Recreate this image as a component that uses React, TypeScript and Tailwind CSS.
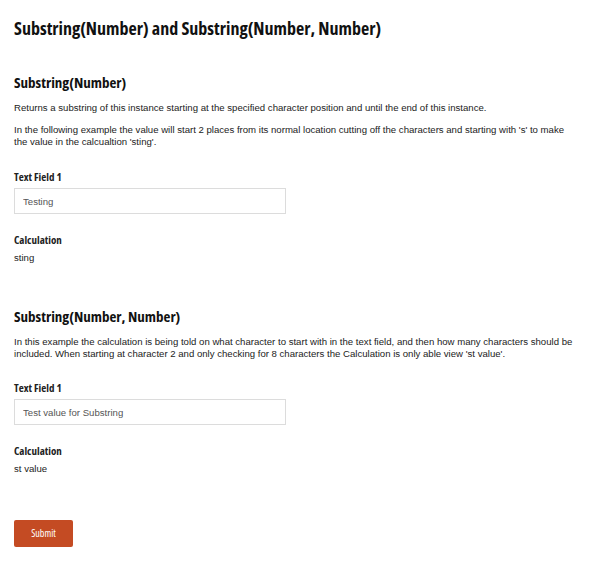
const HEADING_FONT = "font-['Open_Sans','DejaVu_Sans_Condensed',sans-serif] font-bold font-stretch-[75%]"

const BODY_FONT = "font-['Liberation_Sans',Arial,sans-serif]"

const H2_CLASSNAME = `${HEADING_FONT} text-[15px] leading-[20px] text-[#111]`

const P_CLASSNAME = 'mt-[10px] text-[9.6px] leading-[12px]'

const LABEL_CLASSNAME = `${HEADING_FONT} text-[11px] leading-[14px] text-[#222]`

const INPUT_CLASSNAME =
  "mt-[4px] block h-[26px] w-[272px] border border-[#dcdcdc] bg-white px-[8px] text-[9.6px] text-[#555] font-['Liberation_Sans',Arial,sans-serif] outline-none"

function Field(props: { label: string; value: string }) {
  return (
    <div>
      <div className={LABEL_CLASSNAME}>{props.label}</div>
      <input type="text" readOnly value={props.value} className={INPUT_CLASSNAME} />
    </div>
  )
}

function CalculationResult(props: { value: string }) {
  return (
    <div className="mt-[19px]">
      <div className={LABEL_CLASSNAME}>Calculation</div>
      <div className="mt-[5px] text-[9.6px] leading-[12px] text-[#222]">{props.value}</div>
    </div>
  )
}

export default function App() {
  return (
    <div className={`${BODY_FONT} min-h-[562px] bg-white px-[14px] pt-[16px] pb-[14px] text-[#222]`}>
      <h1 className={`${HEADING_FONT} text-[18px] leading-[24px] text-[#111]`}>
        Substring(Number) and Substring(Number, Number)
      </h1>

      <section className="mt-[32px]">
        <h2 className={H2_CLASSNAME}>Substring(Number)</h2>
        <p className={P_CLASSNAME}>
          Returns a substring of this instance starting at the specified character position and until the end of this
          instance.
        </p>
        <p className={P_CLASSNAME}>
          In the following example the value will start 2 places from its normal location cutting off the characters and
          starting with 's' to make the value in the calcualtion 'sting'.
        </p>
        <div className="mt-[22px]">
          <Field label="Text Field 1" value="Testing" />
        </div>
        <CalculationResult value="sting" />
      </section>

      <section className="mt-[42px]">
        <h2 className={H2_CLASSNAME}>Substring(Number, Number)</h2>
        <p className={P_CLASSNAME}>
          In this example the calculation is being told on what character to start with in the text field, and then how
          many characters should be included. When starting at character 2 and only checking for 8 characters the
          Calculation is only able view 'st value'.
        </p>
        <div className="mt-[21px]">
          <Field label="Text Field 1" value="Test value for Substring" />
        </div>
        <CalculationResult value="st value" />
      </section>

      <button
        type="button"
        className={`${HEADING_FONT} mt-[45px] block h-[27px] w-[59px] rounded-[2px] bg-[#c44b23] text-[10px] !font-normal text-white`}
      >
        Submit
      </button>
    </div>
  )
}
